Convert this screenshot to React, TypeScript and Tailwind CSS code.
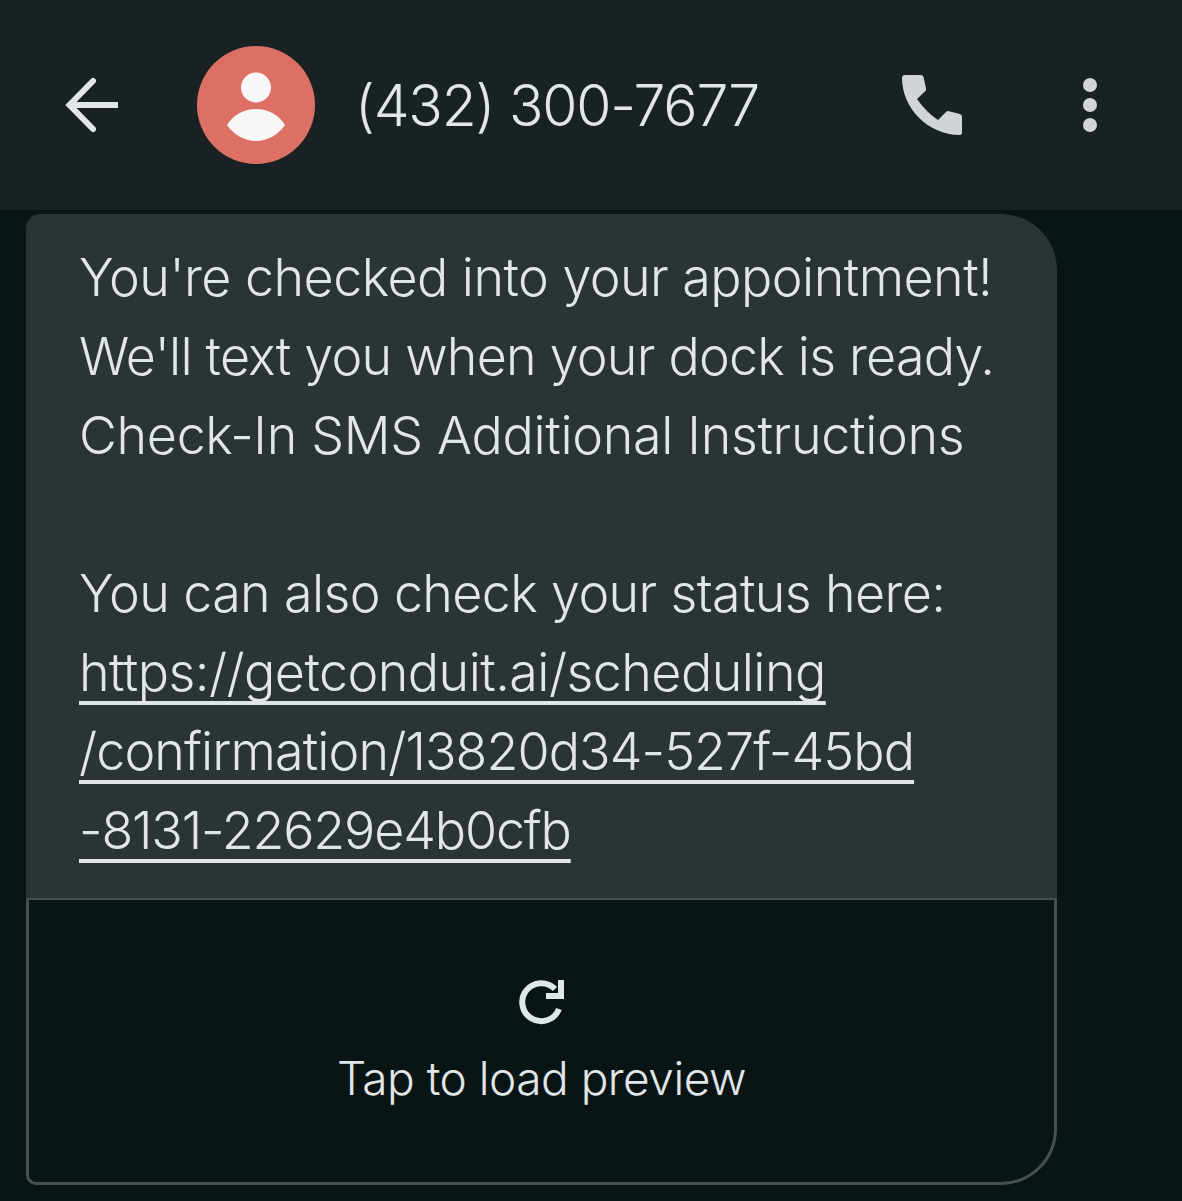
// Messages conversation screen with a link preview placeholder
function BackIcon() {
  return (
    <svg width="56" height="56" viewBox="0 0 56 56" fill="none" stroke="#e1e6e8" strokeWidth="6">
      <path d="M6 28 H55" />
      <path d="M30 4 L6.500 28 L30 52" strokeLinecap="round" strokeLinejoin="miter" />
    </svg>
  );
}

function Avatar() {
  return (
    <svg width="118" height="118" viewBox="0 0 118 118">
      <circle cx="59" cy="59" r="59" fill="#dc7064" />
      <circle cx="59" cy="41.500" r="15" fill="#f7f7f7" />
      <path d="M30 79 C36 69 47 63 59 63 C71 63 82 69 88 79 C82 88 71 95 59 95 C47 95 36 88 30 79 Z" fill="#f7f7f7" />
    </svg>
  );
}

function PhoneIcon() {
  return (
    <svg width="60" height="60" viewBox="0 0 60 60" fill="#d0d5d7">
      <path d="M3 0 H19 Q21 0 21.500 2 L24 13 Q24.500 15 23 16.500 L15 24 Q24 37 36 45 L44 37 Q45.500 35.500 48 36.500 L58 39 Q60 39.500 60 42 V58 Q60 60 58 60 C26 60 0 33 0 3 Q0 0 3 0 Z" />
    </svg>
  );
}

function MoreIcon() {
  return (
    <div className="flex flex-col gap-[6px]">
      <div className="w-[14px] h-[14px] rounded-full bg-[#d0d5d7]" />
      <div className="w-[14px] h-[14px] rounded-full bg-[#d0d5d7]" />
      <div className="w-[14px] h-[14px] rounded-full bg-[#d0d5d7]" />
    </div>
  );
}

function ReloadIcon() {
  return (
    <svg width="46" height="46" viewBox="0 0 46 46" fill="none" stroke="#e1e6e8" strokeWidth="6">
      <path d="M37 10 A19 19 0 1 0 41 30" />
      <path d="M43 1 V17 H28" />
    </svg>
  );
}

export default function App() {
  return (
    <div className="w-[1182px] h-[1201px] overflow-hidden bg-[#091414] font-['Inter',sans-serif] font-[350] text-[#e1e6e8]">
      <header className="h-[210px] bg-[#1a2123] flex items-center pl-[63px]">
        <BackIcon />
        <div className="ml-[78px]">
          <Avatar />
        </div>
        <div className="ml-[40px] text-[57px] tracking-[-1.2px] leading-none w-[547px]">(432) 300-7677</div>
        <PhoneIcon />
        <div className="ml-[121px]">
          <MoreIcon />
        </div>
      </header>
      <div className="ml-[26px] mt-[4px] w-[1031px]">
        <div className="h-[684px] bg-[#2c3335] rounded-tl-[14px] rounded-tr-[56px] pl-[53px] pt-[24px] text-[52px] leading-[79px]">
          <div className="tracking-[-0.55px]">You're checked into your appointment!</div>
          <div className="tracking-[-0.78px]">We'll text you when your dock is ready.</div>
          <div className="tracking-[-0.33px]">Check-In SMS Additional Instructions</div>
          <div className="h-[79px]" />
          <div className="tracking-[-0.63px]">You can also check your status here:</div>
          <div className="underline decoration-[4px] underline-offset-[10px] [text-decoration-skip-ink:none]">
            <div><span className="tracking-[-0.55px]">https://getconduit.ai/scheduling</span></div>
            <div><span className="tracking-[-0.9px]">/confirmation/13820d34-527f-45bd</span></div>
            <div><span className="tracking-[-1.15px]">-8131-22629e4b0cfb</span></div>
          </div>
        </div>
        <div className="h-[287px] border-[3px] border-t-2 border-[#465052] rounded-bl-[10px] rounded-br-[56px] flex flex-col items-center pt-[79px] pr-[2px]">
          <ReloadIcon />
          <div className="mt-[23px] ml-[2px] text-[46px] tracking-[-0.5px] leading-[60px]">Tap to load preview</div>
        </div>
      </div>
    </div>
  );
}
